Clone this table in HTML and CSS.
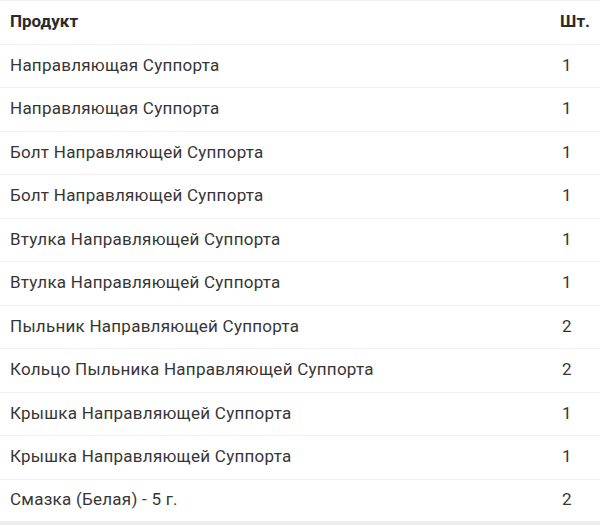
FILE: index.html
```html
<!DOCTYPE html>
<html lang="ru">
<head>
<meta charset="utf-8">
<link rel="stylesheet" href="styles.css">
</head>
<body>
<table class="parts">
  <thead>
    <tr><th class="name">Продукт</th><th class="qty">Шт.</th></tr>
  </thead>
  <tbody>
    <tr><td class="name">Направляющая Суппорта</td><td class="qty">1</td></tr>
    <tr><td class="name">Направляющая Суппорта</td><td class="qty">1</td></tr>
    <tr><td class="name">Болт Направляющей Суппорта</td><td class="qty">1</td></tr>
    <tr><td class="name">Болт Направляющей Суппорта</td><td class="qty">1</td></tr>
    <tr><td class="name">Втулка Направляющей Суппорта</td><td class="qty">1</td></tr>
    <tr><td class="name">Втулка Направляющей Суппорта</td><td class="qty">1</td></tr>
    <tr><td class="name">Пыльник Направляющей Суппорта</td><td class="qty">2</td></tr>
    <tr><td class="name">Кольцо Пыльника Направляющей Суппорта</td><td class="qty">2</td></tr>
    <tr><td class="name">Крышка Направляющей Суппорта</td><td class="qty">1</td></tr>
    <tr><td class="name">Крышка Направляющей Суппорта</td><td class="qty">1</td></tr>
    <tr><td class="name">Смазка (Белая) - 5 г.</td><td class="qty">2</td></tr>
  </tbody>
</table>
</body>
</html>
```
FILE: styles.css
```css
html, body {
  margin: 0;
  padding: 0;
  background: #fff;
}
body {
  font-family: Roboto, "Liberation Sans", sans-serif;
  color: #363636;
  font-size: 17px;
}
.parts {
  width: 600px;
  border-collapse: collapse;
  border-bottom: 4px solid #ececec;
}
.parts th, .parts td {
  height: 43.5px;
  box-sizing: border-box;
  padding: 0 10px 2px;
  border-top: 1px solid #efefef;
  text-align: left;
  vertical-align: middle;
  line-height: 20px;
}
.parts td {
  letter-spacing: 0.25px;
}
.parts th {
  font-weight: 700;
  color: #2a2a2a;
}
.parts th.qty {
  padding-left: 8px;
}
.parts .qty {
  width: 39px;
}
```
